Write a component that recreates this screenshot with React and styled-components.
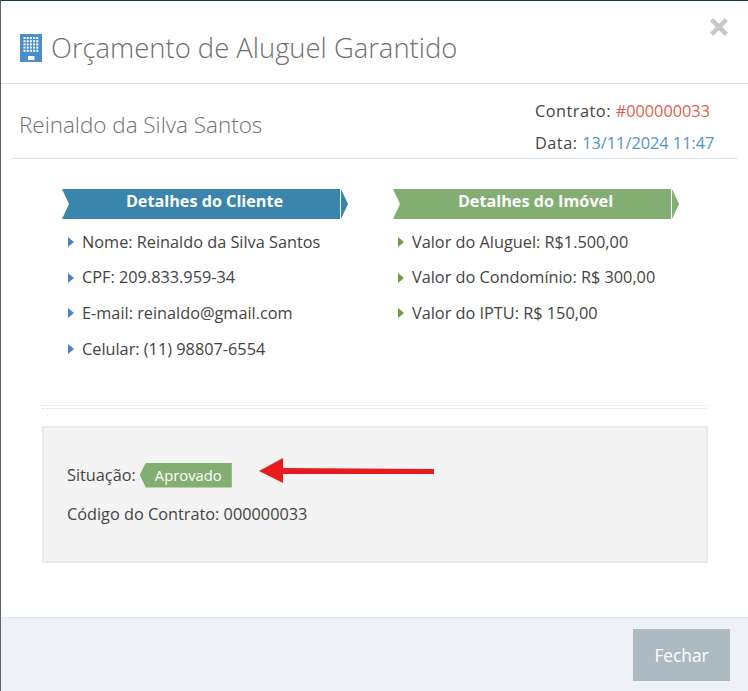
import React from "react";
import styled, { createGlobalStyle } from "styled-components";

const Global = createGlobalStyle`
  html, body { margin: 0; padding: 0; background: #fff; }
  body { font-family: "Open Sans", "Liberation Sans", sans-serif; color: #444; overflow: hidden; }
  * { box-sizing: border-box; }
`;
const Modal = styled.div`
  width: 748px; height: 691px; display: flex; flex-direction: column;
  background: #fff; border-top: 1px solid #123a4a; border-left: 1px solid #5c6468; position: relative;
`;
const Header = styled.header`
  height: 83px; flex: none; border-bottom: 1px solid #e4e4e4; padding: 29px 0 0 19px;
  display: flex; align-items: flex-start; gap: 9px;
`;
const Title = styled.h1`
  margin: 0; font-size: 27.4px; line-height: 36px; font-weight: 300; color: #6f6f6f;
`;
const Close = styled.button`
  position: absolute; top: 17px; right: 18px; width: 20px; height: 20px; padding: 0; border: 0; background: none;
  display: flex;
`;
const Sub = styled.div`
  margin: 0 10px 0 11px; height: 75px; flex: none; border-bottom: 1px solid #dce8f1;
  display: flex; justify-content: space-between; align-items: flex-start;
`;
const Name = styled.h2`
  margin: 24px 0 0 7px; font-size: 22.45px; line-height: 34px; font-weight: 300; color: #707070;
`;
const Meta = styled.div`
  width: 203px; padding-top: 11px; font-size: 16.3px; line-height: 32px; color: #444;
`;
const MetaRow = styled.div`display: block;`;
const MetaLabel = styled.span`letter-spacing: .5px;`;
const Accent = styled.span`color: ${p => p.$c};`;
const Columns = styled.div`
  display: flex; padding: 30px 0 0 61px; flex: none; height: 246px;
`;
const Col = styled.section`width: ${p => p.$w}px; flex: none;`;
const Ribbon = styled.div`
  width: 278px; height: 30px; background: ${p => p.$bg};
  color: #fff; font-size: 16.2px; font-weight: 700; line-height: 24px; text-align: center; padding-left: ${p => p.$pad}px;
  clip-path: polygon(0 0, 100% 0, 100% 100%, 0 100%, 7px 50%);
`;
const RibbonWrap = styled.div`display: flex; gap: 1px;`;
const Tip = styled.div`
  width: 0; height: 0; border-top: 15px solid transparent; border-bottom: 15px solid transparent;
  border-left: 7px solid ${p => p.$bg};
`;
const List = styled.ul`list-style: none; margin: 5px 0 0 ${p => p.$ml}px; padding: 0;`;
const Item = styled.li`
  display: flex; align-items: center; gap: 8px; height: 35.6px; font-size: 16.3px; color: #444; white-space: nowrap;
`;
const Bullet = styled.i`
  width: 0; height: 0; border-top: 5px solid transparent; border-bottom: 5px solid transparent;
  border-left: 6px solid ${p => p.$c}; flex: none; margin-top: 1px;
`;
const Dotted = styled.div`
  margin: 0 40px 0 41px; height: 4px; flex: none;
  border-top: 1px dotted #dedede; border-bottom: 1px dotted #dedede;
`;
const Panel = styled.div`
  position: relative; margin: 17px 40px 0 41px; height: 137px; flex: none;
  background: #f4f4f4; border: 2px solid #eaeaea; padding: 32px 0 0 23px;
`;
const Line = styled.div`
  display: flex; align-items: center; height: 30px; font-size: 16.3px; color: #444; margin-bottom: ${p => p.$mb || 0}px;
`;
const Badge = styled.span`
  margin-left: 4px; height: 25px; width: 92px; background: #82ae71; color: #fff; font-size: 14.8px;
  display: flex; align-items: center; padding-left: 15px;
  clip-path: polygon(6px 0, 100% 0, 100% 100%, 6px 100%, 0 50%);
`;
const Arrow = styled.svg`
  position: absolute; left: 215px; top: 30px;
`;
const Footer = styled.footer`
  margin-top: auto; height: 74px; background: #eef1f6; border-top: 1px solid #e3e7eb;
  display: flex; justify-content: flex-end; padding: 11px 18px 0 0;
`;
const Button = styled.button`
  width: 97px; height: 52px; border: 0; background: #adbac2; color: #fff;
  font-family: inherit; font-size: 17.3px;
`;

function Building() {
  const dots = [];
  for (let r = 0; r < 5; r++) for (let c = 0; c < 5; c++)
    dots.push(<rect key={`${r}-${c}`} x={3.5 + c * 3.2} y={3 + r * 3.2} width="2" height="2" fill="#fff" />);
  return (
    <svg width="22" height="28" viewBox="0 0 22 28" style={{ marginTop: 4, flex: "none" }}>
      <rect width="22" height="28" fill="#4a8fcc" />
      {dots}
      <rect x="8" y="22" width="6.5" height="4" fill="#fff" />
    </svg>
  );
}

const client = ["Nome: Reinaldo da Silva Santos", "CPF: 209.833.959-34", "E-mail: reinaldo@gmail.com", "Celular: (11) 98807-6554"];
const imovel = ["Valor do Aluguel: R$1.500,00", "Valor do Condomínio: R$ 300,00", "Valor do IPTU: R$ 150,00"];

export default function App() {
  return (
    <>
      <Global />
      <Modal>
        <Header>
          <Building />
          <Title>Orçamento de Aluguel Garantido</Title>
        </Header>
        <Close aria-label="Fechar">
          <svg width="18" height="18" viewBox="0 0 18 18"><path d="M1.6 1.6 L16.4 16.4 M16.4 1.6 L1.6 16.4" stroke="#c8c8c8" strokeWidth="4.4" /></svg>
        </Close>
        <Sub>
          <Name>Reinaldo da Silva Santos</Name>
          <Meta>
            <MetaRow><MetaLabel>Contrato: </MetaLabel><Accent $c="#e2604f">#000000033</Accent></MetaRow>
            <MetaRow><MetaLabel>Data: </MetaLabel><Accent $c="#4f94cd">13/11/2024 11:47</Accent></MetaRow>
          </Meta>
        </Sub>
        <Columns>
          <Col $w={331}>
            <RibbonWrap>
              <Ribbon $bg="#3a85ab" $pad={7}>Detalhes do Cliente</Ribbon>
              <Tip $bg="#3a85ab" />
            </RibbonWrap>
            <List $ml={6}>{client.map(t => <Item key={t}><Bullet $c="#4a86c0" />{t}</Item>)}</List>
          </Col>
          <Col $w={300}>
            <RibbonWrap>
              <Ribbon $bg="#82ae71" $pad={7}>Detalhes do Imóvel</Ribbon>
              <Tip $bg="#82ae71" />
            </RibbonWrap>
            <List $ml={5}>{imovel.map(t => <Item key={t}><Bullet $c="#6f9e3e" />{t}</Item>)}</List>
          </Col>
        </Columns>
        <Dotted />
        <Panel>
          <Line $mb={9}>Situação:<Badge>Aprovado</Badge></Line>
          <Line>Código do Contrato: 000000033</Line>
          <Arrow width="178" height="28" viewBox="0 0 178 28">
            <path d="M0 13 L24 0 L24 10 L175 11 L175 16 L24 16 L24 25 Z" fill="#e81c1c" />
          </Arrow>
        </Panel>
        <Footer><Button>Fechar</Button></Footer>
      </Modal>
    </>
  );
}
